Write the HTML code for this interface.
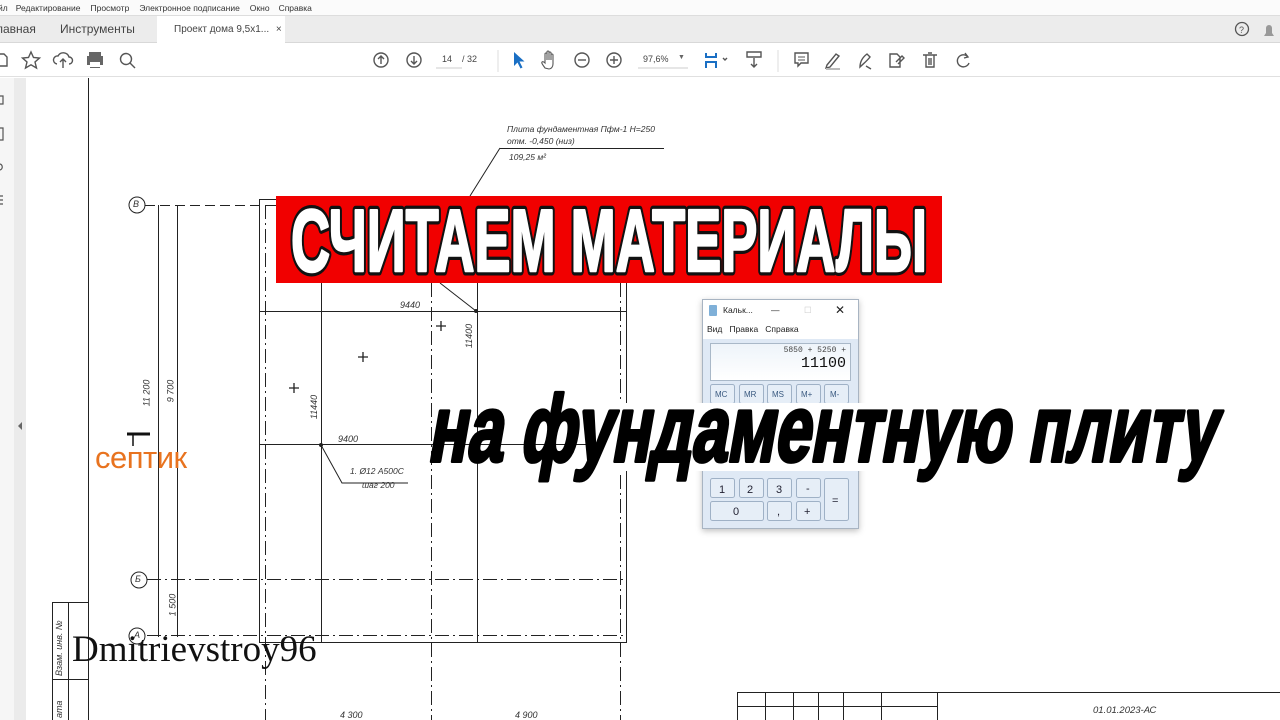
<!DOCTYPE html>
<html><head><meta charset="utf-8"><style>
*{margin:0;padding:0;box-sizing:border-box}
body{width:1280px;height:720px;overflow:hidden;background:#fff;font-family:"Liberation Sans","Noto Sans CJK SC",sans-serif;position:relative}
.abs{position:absolute}
</style></head><body>
<!-- menu bar -->
<div class="abs" style="left:0;top:0;width:1280px;height:16px;background:#fbfbfb;border-bottom:1px solid #ddd;font-size:8.5px;color:#333;line-height:16px;white-space:nowrap">
<span style="margin-left:-2px">йл</span><span style="margin-left:8px">Редактирование</span><span style="margin-left:10px">Просмотр</span><span style="margin-left:10px">Электронное подписание</span><span style="margin-left:10px">Окно</span><span style="margin-left:9px">Справка</span></div>
<!-- tab bar -->
<div class="abs" style="left:0;top:16px;width:1280px;height:27px;background:#ececec;border-bottom:1px solid #d8d8d8"></div>
<div class="abs" style="left:-4px;top:22px;font-size:12px;color:#444">лавная</div>
<div class="abs" style="left:60px;top:22px;font-size:12px;color:#444">Инструменты</div>
<div class="abs" style="left:157px;top:16px;width:128px;height:28px;background:#fff;font-size:10px;color:#444;line-height:27px;padding-left:17px">Проект дома 9,5х1... <span style="margin-left:4px">×</span></div>
<svg class="abs" style="left:1232px;top:20px" width="48" height="20"><circle cx="10" cy="9" r="6.5" fill="none" stroke="#555" stroke-width="1.3"/><text x="7" y="13" font-size="9" fill="#555" font-family="Liberation Sans">?</text><path d="M32 16h10l-2-3v-5a3 3 0 0 0-6 0v5z" fill="#999"/></svg>
<!-- toolbar -->
<div class="abs" style="left:0;top:44px;width:1280px;height:33px;background:#fff;border-bottom:1px solid #e0e0e0"></div>
<svg class="abs" style="left:0;top:44px" width="1280" height="33" fill="none" stroke="#555" stroke-width="1.4">
<path d="M0 10h4l3 3v9H0"/>
<path d="M31 8l2.5 5.5 6 .5-4.5 4 1.5 6-5.5-3.2-5.5 3.2 1.5-6-4.5-4 6-.5z"/>
<path d="M57 20a4 4 0 0 1 1-8 6 6 0 0 1 11 1 3.5 3.5 0 0 1 0 7M63 24v-9m-3 3l3-3 3 3"/>
<path d="M89 12v-4h12v4M87 12h16v9H87zM90 18h10v6H90z" fill="#666" stroke="none"/><rect x="90" y="18" width="10" height="5" fill="#fff" stroke="none"/>
<circle cx="126" cy="15" r="5.5"/><path d="M130 19l5 5"/>
<circle cx="381" cy="16" r="7"/><path d="M381 20v-8m-3 3l3-3 3 3"/>
<circle cx="414" cy="16" r="7"/><path d="M414 12v8m-3-3l3 3 3-3"/>
<path d="M436 24h26" stroke="#ccc" stroke-width="1"/>
<path d="M498 6v22" stroke="#ddd" stroke-width="1"/>
<path d="M514 8l0 14 3.5-3.5 3 6 2-1-3-6h5z" fill="#1a6fc4" stroke="none"/>
<path d="M545 24c-2-3-4-5-3-6s2 0 3 1v-9a1 1 0 0 1 2 0v6-8a1 1 0 0 1 2 0v8-7a1 1 0 0 1 2 0v7-5a1 1 0 0 1 2 0v9c0 3-2 5-4 5z" stroke-width="1.1"/>
<circle cx="582" cy="16" r="7"/><path d="M578 16h8"/>
<circle cx="614" cy="16" r="7"/><path d="M610 16h8M614 12v8"/>
<path d="M638 24h50" stroke="#ccc" stroke-width="1"/>
<path d="M706 9v4h10V9M706 24v-6h10v6" stroke="#1a6fc4" stroke-width="2"/><path d="M723 14l2 2 2-2" stroke="#555"/>
<path d="M747 8h14v5h-14zM754 14v9m-3-3l3 3 3-3"/>
<path d="M778 6v22" stroke="#ddd" stroke-width="1"/>
<path d="M795 9h13v10h-7l-3 3v-3h-3z"/><path d="M798 13h7M798 16h7" stroke-width="1"/>
<path d="M827 21l9-11 3 2-9 11-4 1z"/><path d="M826 25h14" stroke="#bbb" stroke-width="2"/>
<path d="M860 23c0-6 3-10 7-13l3 3c-3 4-7 7-10 10zM866 22l5 3"/>
<path d="M890 10h7l3 3v10h-10zM896 18l6-6 2 2-6 6"/>
<path d="M923 11h14M926 11v12h8V11M928 9h4M929 14v7M931 14v7"/>
<path d="M968 13a6 6 0 1 0 1 6M965 9l3 4-4 1"/>
</svg>
<div class="abs" style="left:442px;top:54px;font-size:9px;color:#444">14</div>
<div class="abs" style="left:462px;top:54px;font-size:9px;color:#444">/ 32</div>
<div class="abs" style="left:643px;top:54px;font-size:9px;color:#444">97,6%</div>
<div class="abs" style="left:678px;top:54px;font-size:7px;color:#666">▼</div>
<!-- left panel -->
<div class="abs" style="left:0;top:78px;width:14px;height:642px;background:#f6f6f6"></div>
<div class="abs" style="left:14px;top:78px;width:12px;height:642px;background:#ebebeb"></div>
<svg class="abs" style="left:0;top:78px" width="26" height="400" fill="none" stroke="#555" stroke-width="1.2"><path d="M0 18h3v8H0M0 50h3v12H0M0 86c3 1 3 5 0 6M0 118h3M0 122h3M0 126h3"/><path d="M22 344l-4 4 4 4z" fill="#666" stroke="none"/></svg>
<!-- drawing -->
<svg class="abs" style="left:0;top:0" width="1280" height="720" fill="none" stroke="#222" stroke-width="1">
<path d="M88.5 78v642"/>
<circle cx="137" cy="205" r="8"/>
<circle cx="139" cy="580" r="8"/>
<circle cx="137" cy="636" r="8"/>
<path d="M145 205.5h115" stroke-dasharray="10 5"/>
<path d="M158.5 205v432M177.5 205v432"/>
<path d="M259.5 199.5h367v443h-367z"/>
<path d="M265.5 205v515M431.5 283v437M620.5 283v437" stroke-dasharray="14 4 2 4"/>
<path d="M265.5 205.5h360" stroke-dasharray="14 4 2 4"/>
<path d="M259 311.5h367M321.5 283v360M477.5 283v360M259 444.5h367"/>
<path d="M147 579.5h479M147 635.5h479" stroke-dasharray="14 4 2 4"/>
<path d="M476 311L440 283M500 148l-30 48M500 148.5h164"/>
<path d="M321 445l21 38h66"/>
<circle cx="476" cy="311" r="1.5" fill="#222"/><circle cx="321" cy="445" r="1.5" fill="#222"/>
<path d="M436 326h10M441 321v10M358 357h10M363 352v10M289 388h10M294 383v10" stroke-width="1.3"/>
<path d="M52.5 602v118M68.5 602v118M52 602.5h36M52 679.5h36"/>
<path d="M737.5 692v28M737 692.5h543M737 706.5h200M765.5 692v28M793.5 692v28M818.5 692v28M843.5 692v28M881.5 692v28M937.5 692v28"/>
<path d="M127 434h23" stroke="#111" stroke-width="3"/><path d="M133 434v12" stroke="#111" stroke-width="1.5"/>
</svg>
<div class="abs" style="left:507px;top:124px;font-size:8.5px;font-style:italic;color:#333">Плита фундаментная Пфм-1 Н=250</div>
<div class="abs" style="left:507px;top:136px;font-size:8.5px;font-style:italic;color:#333">отм. -0,450 (низ)</div>
<div class="abs" style="left:509px;top:152px;font-size:8.5px;font-style:italic;color:#333">109,25 м²</div>
<div class="abs" style="left:400px;top:300px;font-size:9px;font-style:italic;color:#333">9440</div>
<div class="abs" style="left:338px;top:434px;font-size:9px;font-style:italic;color:#333">9400</div>
<div class="abs" style="left:350px;top:466px;font-size:8.5px;font-style:italic;color:#333">1. Ø12 А500С</div>
<div class="abs" style="left:362px;top:480px;font-size:8.5px;font-style:italic;color:#333">шаг 200</div>
<div class="abs" style="left:340px;top:710px;font-size:9px;font-style:italic;color:#333">4 300</div>
<div class="abs" style="left:515px;top:710px;font-size:9px;font-style:italic;color:#333">4 900</div>
<div class="abs" style="left:1093px;top:705px;font-size:9.5px;font-style:italic;color:#333">01.01.2023-АС</div>
<div class="abs" style="left:133px;top:199px;font-size:9px;font-style:italic;color:#333">В</div>
<div class="abs" style="left:135px;top:574px;font-size:9px;font-style:italic;color:#333">Б</div>
<div class="abs" style="left:134px;top:630px;font-size:9px;font-style:italic;color:#333">А</div>
<div class="abs" style="left:133px;top:388px;font-size:9px;font-style:italic;color:#333;transform:rotate(-90deg)">11 200</div>
<div class="abs" style="left:159px;top:386px;font-size:9px;font-style:italic;color:#333;transform:rotate(-90deg)">9 700</div>
<div class="abs" style="left:302px;top:402px;font-size:9px;font-style:italic;color:#333;transform:rotate(-90deg)">11440</div>
<div class="abs" style="left:457px;top:331px;font-size:9px;font-style:italic;color:#333;transform:rotate(-90deg)">11400</div>
<div class="abs" style="left:161px;top:600px;font-size:9px;font-style:italic;color:#333;transform:rotate(-90deg)">1 500</div>
<div class="abs" style="left:54px;top:676px;width:80px;font-size:9px;font-style:italic;color:#333;transform:rotate(-90deg);transform-origin:0 0;white-space:nowrap">Взам. инв. №</div>
<div class="abs" style="left:54px;top:718px;font-size:9px;font-style:italic;color:#333;transform:rotate(-90deg);transform-origin:0 0">ата</div>
<div class="abs" style="left:95px;top:440px;font-size:31px;color:#e8731f;letter-spacing:-0.5px">септик</div>
<div class="abs" style="left:72px;top:628px;font-size:37px;font-family:'Liberation Serif',serif;color:#111">Dmitrievstroy96</div>
<!-- calculator -->
<div class="abs" style="left:702px;top:299px;width:157px;height:230px;background:#dfe9f5;border:1px solid #a8b4c2;box-shadow:0 2px 6px rgba(0,0,0,.25)">
<div style="height:22px;background:#fff;font-size:8.5px;color:#222;line-height:21px;padding-left:20px;position:relative">Кальк...<span style="position:absolute;left:68px">—</span><span style="position:absolute;left:101px;color:#ccc">☐</span><span style="position:absolute;left:132px;font-size:12px">✕</span><div style="position:absolute;left:6px;top:5px;width:8px;height:11px;background:#7fb0d8;border-radius:1px"></div></div>
<div style="height:17px;background:#fff;font-size:8.5px;color:#222;line-height:15px;padding-left:4px">Вид&nbsp;&nbsp;&nbsp;Правка&nbsp;&nbsp;&nbsp;Справка</div>
<div style="position:absolute;left:7px;top:43px;width:141px;height:38px;background:linear-gradient(#eef4fa,#fff);border:1px solid #a9b8c8;font-family:'Liberation Mono',monospace;text-align:right;padding-right:4px">
<div style="font-size:8px;color:#444;margin-top:2px">5850 + 5250 +</div><div style="font-size:15px;color:#111;line-height:17px">11100</div></div>
</div>
<svg class="abs" style="left:702px;top:299px" width="157" height="230" font-family="Liberation Sans" font-size="9" fill="#3a5a80">
<g fill="#e6eef7" stroke="#9fb1c6">
<rect x="8.5" y="85.5" width="24" height="19" rx="2"/><rect x="37.5" y="85.5" width="24" height="19" rx="2"/><rect x="65.5" y="85.5" width="24" height="19" rx="2"/><rect x="94.5" y="85.5" width="24" height="19" rx="2"/><rect x="122.5" y="85.5" width="24" height="19" rx="2"/>
<rect x="8.5" y="179.5" width="24" height="19" rx="2"/><rect x="37.5" y="179.5" width="24" height="19" rx="2"/><rect x="65.5" y="179.5" width="24" height="19" rx="2"/><rect x="94.5" y="179.5" width="24" height="19" rx="2"/>
<rect x="8.5" y="202.5" width="53" height="19" rx="2"/><rect x="65.5" y="202.5" width="24" height="19" rx="2"/><rect x="94.5" y="202.5" width="24" height="19" rx="2"/>
<rect x="122.5" y="179.5" width="24" height="42" rx="2"/>
</g>
<text x="13" y="98" font-size="8">MC</text><text x="42" y="98" font-size="8">MR</text><text x="70" y="98" font-size="8">MS</text><text x="99" y="98" font-size="8">M+</text><text x="128" y="98" font-size="8">M-</text>
<g font-size="11" fill="#223"><text x="17" y="194">1</text><text x="45" y="194">2</text><text x="74" y="194">3</text><text x="104" y="193">-</text><text x="31" y="216">0</text><text x="75" y="216">,</text><text x="102" y="216">+</text><text x="130" y="205">=</text></g>
</svg>
<!-- titles -->
<div class="abs" style="left:276px;top:196px;width:666px;height:87px;background:#f10000"></div>
<svg class="abs" style="left:0;top:0" width="1280" height="720">
<text x="291" y="271" font-family="Liberation Sans" font-weight="bold" font-size="88" textLength="636" lengthAdjust="spacingAndGlyphs" fill="#fff" stroke="#111" stroke-width="9" paint-order="stroke" stroke-linejoin="round">СЧИТАЕМ МАТЕРИАЛЫ</text>
<text x="291" y="271" font-family="Liberation Sans" font-weight="bold" font-size="88" textLength="636" lengthAdjust="spacingAndGlyphs" fill="#fff" stroke="#fff" stroke-width="2.5" stroke-linejoin="round">СЧИТАЕМ МАТЕРИАЛЫ</text>
<rect x="600" y="403" width="270" height="68" fill="#fff"/>
<g transform="skewX(-10)"><text x="508" y="461" font-family="Liberation Sans" font-weight="bold" font-size="94" textLength="788" lengthAdjust="spacingAndGlyphs" fill="#000" stroke="#000" stroke-width="4" stroke-linejoin="round">на фундаментную плиту</text></g>
</svg>
</body></html>
